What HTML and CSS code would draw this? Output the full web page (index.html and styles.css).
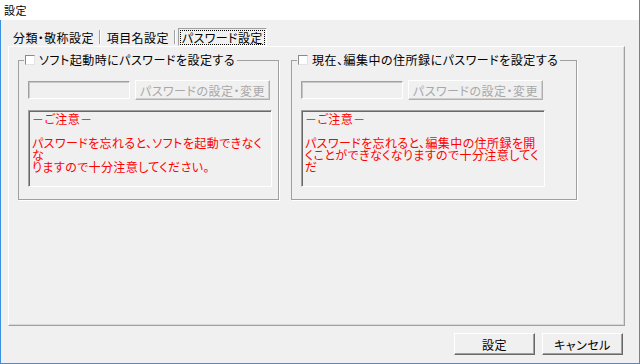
FILE: index.html
```html
<!DOCTYPE html>
<html lang="ja">
<head>
  <meta charset="UTF-8">
  <title>設定</title>
  <link rel="stylesheet" href="styles.css">
</head>
<body>
  <div class="window">
    <div class="titlebar">設定</div>
    <div class="client">
      <div class="tabs">
        <span class="tab">分類・敬称設定</span>
        <span class="tab-sep"></span>
        <span class="tab">項目名設定</span>
        <span class="tab-sep"></span>
        <span class="tab selected"><span class="tab-focus">パスワード設定</span></span>
      </div>

      <div class="panel">
        <fieldset class="group group-left">
          <legend><span class="check"></span>ソフト起動時にパスワードを設定する</legend>
          <div class="row">
            <div class="field"></div>
            <div class="btn disabled">パスワードの設定・変更</div>
          </div>
          <div class="note">
            －ご注意－<br>
            <br>
            パスワードを忘れると、ソフトを起動できなく<br>
            な<br>
            りますので十分注意してください。
          </div>
        </fieldset>

        <fieldset class="group group-right">
          <legend><span class="check"></span>現在、編集中の住所録にパスワードを設定する</legend>
          <div class="row">
            <div class="field"></div>
            <div class="btn disabled">パスワードの設定・変更</div>
          </div>
          <div class="note">
            －ご注意－<br>
            <br>
            パスワードを忘れると、編集中の住所録を開<br>
            くことができなくなりますので十分注意してく<br>
            だ
          </div>
        </fieldset>
      </div>

      <div class="actions">
        <div class="btn action">設定</div>
        <div class="btn action">キャンセル</div>
      </div>
    </div>
  </div>
</body>
</html>
```

FILE: styles.css
```css
:root {
  --face: #f0f0f0;
  --shadow: #a0a0a0;
  --dark: #696969;
  --accent: #3c8fde;
}

html, body {
  margin: 0;
  padding: 0;
  background: var(--face);
}

.window {
  width: 640px;
  height: 364px;
  box-sizing: border-box;
  display: flex;
  flex-direction: column;
  border-right: 1px solid var(--accent);
  border-bottom: 1px solid var(--accent);
  font-family: "Noto Sans CJK JP", sans-serif;
  font-size: 12px;
  font-feature-settings: "palt";
  color: #000;
}

.titlebar {
  height: 20px;
  line-height: 20px;
  padding-left: 4px;
  background: #fff;
  font-size: 11px;
  letter-spacing: 0.5px;
}

.client {
  flex: 1;
  display: flex;
  flex-direction: column;
  padding: 8px 14px 0 7px;
  border-left: 1px solid var(--accent);
  background: var(--face);
}

/* button style tab strip */
.tabs {
  display: flex;
  align-items: center;
  height: 18px;
  letter-spacing: 0.4px;
}

.tab {
  height: 17px;
  line-height: 17px;
  padding: 0 4px 0 5px;
  box-sizing: border-box;
}

.tab-sep {
  width: 1px;
  height: 14px;
  margin: 0 1px;
  background: var(--shadow);
  border-right: 1px solid #fff;
}

.tab.selected {
  display: flex;
  align-items: center;
  padding: 0 2px;
  margin-left: 1px;
  border: 1px solid;
  border-color: var(--shadow) #fff #fff var(--shadow);
  align-self: flex-start;
  height: 18px;
}

.tab-focus {
  line-height: 13px;
  padding: 0 1px;
  outline: 1px dotted #000;
}

.panel {
  height: 280px;
  box-sizing: border-box;
  display: flex;
  align-items: flex-start;
  gap: 12px;
  padding: 6px 0 0 9px;
  border: 1px solid;
  border-color: #fff var(--shadow) var(--shadow) #fff;
  box-shadow: inset -1px -1px 0 #d8d8d8;
}

.group {
  margin: 0;
  min-width: 0;
  box-sizing: border-box;
  padding: 13px 0 12px 9px;
  border: 1px solid var(--shadow);
  box-shadow: 1px 1px 0 #fff;
}

.group-left {
  width: 261px;
}

.group-right {
  width: 286px;
}

.group legend {
  display: flex;
  align-items: center;
  gap: 4px;
  margin-left: -4px;
  padding: 0 2px 0 1px;
  line-height: 14px;
  letter-spacing: 0.5px;
}

.check {
  width: 8px;
  height: 8px;
  background: #fff;
  border: 1px solid;
  border-color: #8a8a8a #e3e3e3 #e3e3e3 #8a8a8a;
}

.row {
  display: flex;
  align-items: flex-start;
  gap: 5px;
}

.field {
  width: 102px;
  height: 18px;
  margin-top: 1px;
  box-sizing: border-box;
  border: 1px solid;
  border-color: var(--shadow) #fff #fff var(--shadow);
  box-shadow: inset 1px 1px 0 #c8c8c8;
}

.btn {
  box-sizing: border-box;
  display: flex;
  align-items: center;
  justify-content: center;
  border: 1px solid;
  border-color: #fff var(--dark) var(--dark) #fff;
  box-shadow: inset -1px -1px 0 var(--shadow);
  background: var(--face);
}

.row .btn {
  width: 135px;
  height: 20px;
  letter-spacing: 0.5px;
}

.btn.disabled {
  color: #a8a8a8;
  border-color: #fff #b0b0b0 #b0b0b0 #fff;
  box-shadow: inset -1px -1px 0 #d0d0d0;
}

.note {
  width: 244px;
  height: 77px;
  margin-top: 10px;
  box-sizing: border-box;
  padding: 2px 3px;
  border: 1px solid;
  border-color: var(--shadow) #fff #fff var(--shadow);
  box-shadow: inset 1px 1px 0 var(--dark);
  color: #ff0000;
  line-height: 12px;
  letter-spacing: 0.4px;
  white-space: nowrap;
  overflow: hidden;
}

.actions {
  display: flex;
  justify-content: flex-end;
  gap: 7px;
  margin-top: 7px;
  padding-right: 2px;
}

.btn.action {
  width: 81px;
  height: 22px;
  letter-spacing: 0.5px;
}
```
